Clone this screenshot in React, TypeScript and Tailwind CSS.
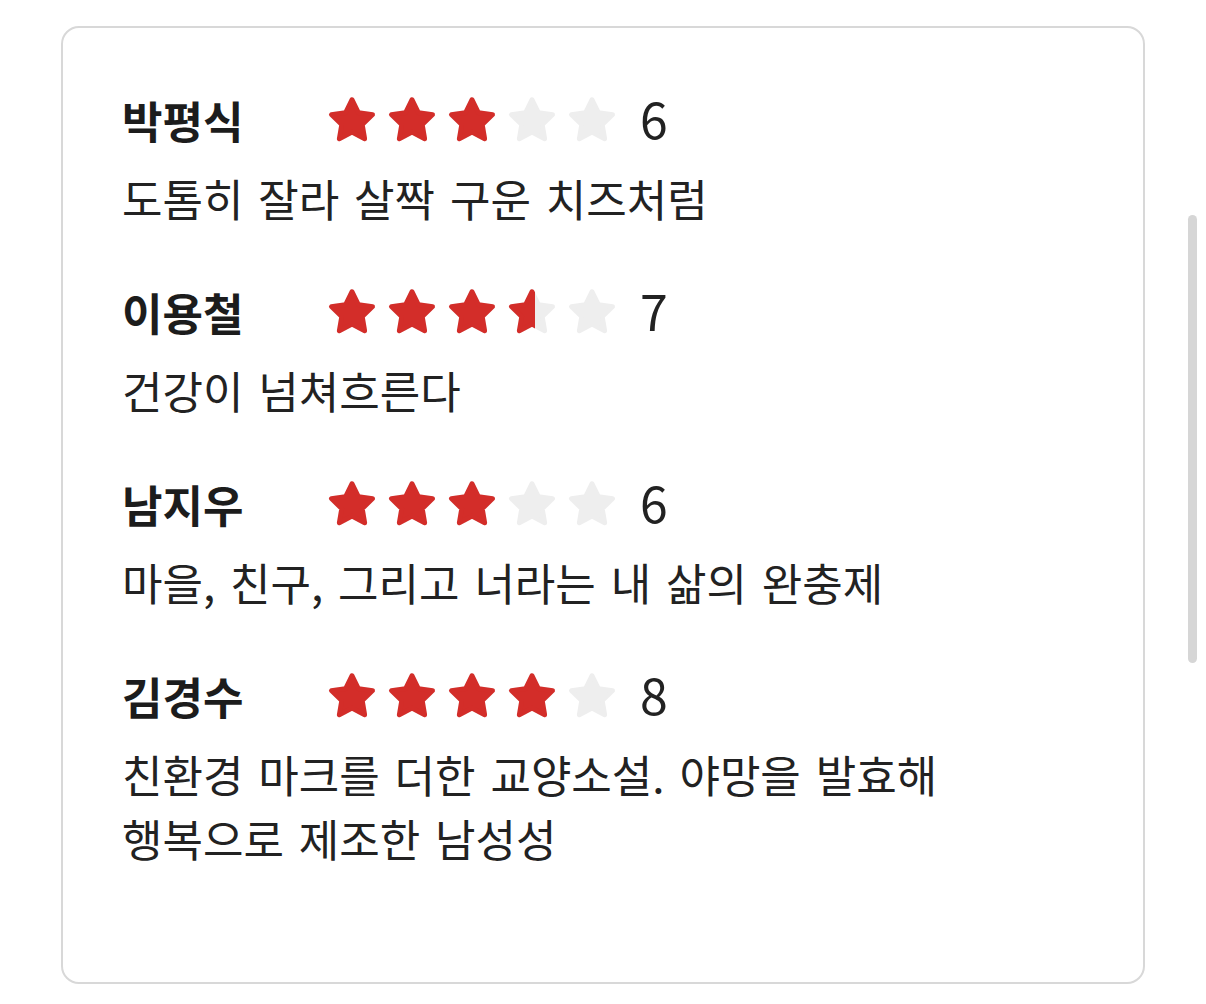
import React from 'react';

type Review = {
  name: string;
  rating: number; // out of 5 stars
  score: number;
  text: string[];
};

const reviews: Review[] = [
  { name: '박평식', rating: 3, score: 6, text: ['도톰히 잘라 살짝 구운 치즈처럼'] },
  { name: '이용철', rating: 3.5, score: 7, text: ['건강이 넘쳐흐른다'] },
  { name: '남지우', rating: 3, score: 6, text: ['마을, 친구, 그리고 너라는 내 삶의 완충제'] },
  {
    name: '김경수',
    rating: 4,
    score: 8,
    text: ['친환경 마크를 더한 교양소설. 야망을 발효해', '행복으로 제조한 남성성'],
  },
];

// chubby star, corners rounded by the stroke join
const STAR_POINTS =
  '12,2.6 14.94,8.55 21.51,9.51 16.76,14.15 17.88,20.69 12,17.6 6.12,20.69 7.24,14.15 2.49,9.51 9.06,8.55';

function Star({ fill, id }: { fill: number; id: string }) {
  // fill: 0 = empty, 1 = full, between = partial
  return (
    <svg width="52" height="52" viewBox="0 0 24 24" className="shrink-0">
      <defs>
        <clipPath id={id}>
          <rect x="0" y="0" width={24 * fill} height="24" />
        </clipPath>
      </defs>
      <polygon
        points={STAR_POINTS}
        fill="#eeeeee"
        stroke="#eeeeee"
        strokeWidth="2.2"
        strokeLinejoin="round"
      />
      {fill > 0 && (
        <polygon
          points={STAR_POINTS}
          fill="#d32d29"
          stroke="#d32d29"
          strokeWidth="2.2"
          strokeLinejoin="round"
          clipPath={`url(#${id})`}
        />
      )}
    </svg>
  );
}

function Stars({ rating, idx }: { rating: number; idx: number }) {
  return (
    <div className="flex items-center gap-[8px]">
      {[0, 1, 2, 3, 4].map(i => {
        const f = Math.max(0, Math.min(1, rating - i));
        return <Star key={i} fill={f === 0.5 ? 0.56 : f} id={`star-${idx}-${i}`} />;
      })}
    </div>
  );
}

export default function App() {
  return (
    <div
      className="relative w-[1206px] h-[1004px] bg-white pt-[26px] pl-[61px] overflow-hidden"
      style={{ fontFamily: '"Noto Sans CJK KR", "Noto Sans", sans-serif' }}
    >
      <div className="w-[1084px] h-[958px] border-2 border-[#d8d8d8] rounded-[18px] bg-white pt-[60px] pl-[59px] flex flex-col gap-[50px]">
        {reviews.map((r, idx) => (
          <div key={r.name} className="flex flex-col gap-[14px]">
            <div className="flex items-center h-[64px]">
              <div className="w-[204px] text-[44px] font-bold text-[#1c1c1c] leading-[64px]">
                {r.name}
              </div>
              <Stars rating={r.rating} idx={idx} />
              <div className="ml-[22px] pb-[6px] text-[50px] font-normal text-[#222222] leading-[64px]">
                {r.score}
              </div>
            </div>
            <div className="text-[44px] [word-spacing:5px] text-[#222222] leading-[64px]">
              {r.text.map(line => (
                <div key={line}>{line}</div>
              ))}
            </div>
          </div>
        ))}
      </div>
      <div className="absolute left-[1188px] top-[215px] w-[9px] h-[448px] rounded-full bg-[#d6d6d6]" />
    </div>
  );
}
